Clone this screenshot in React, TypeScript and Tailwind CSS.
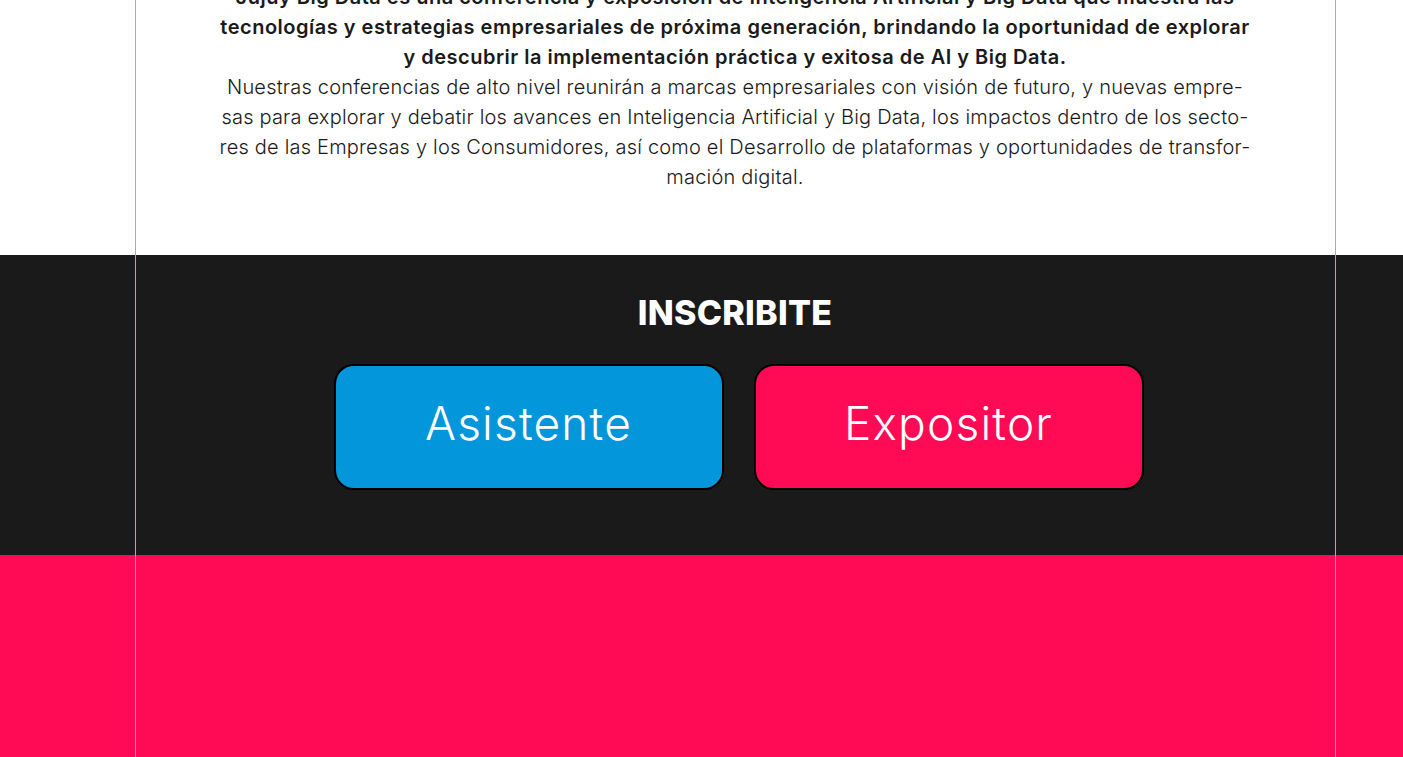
import React from 'react'

const boldLines = [
  'Jujuy Big Data es una conferencia y exposición de Inteligencia Artificial y Big Data que muestra las',
  'tecnologías y estrategias empresariales de próxima generación, brindando la oportunidad de explorar',
  'y descubrir la implementación práctica y exitosa de AI y Big Data.',
]

const lightLines = [
  'Nuestras conferencias de alto nivel reunirán a marcas empresariales con visión de futuro, y nuevas empre-',
  'sas para explorar y debatir los avances en Inteligencia Artificial y Big Data, los impactos dentro de los secto-',
  'res de las Empresas y los Consumidores, así como el Desarrollo de plataformas y oportunidades de transfor-',
  'mación digital.',
]

export default function App() {
  return (
    <div
      className="relative h-[757px] overflow-hidden bg-white"
      style={{ fontFamily: 'Inter, "Open Sans", sans-serif' }}
    >
      {/* intro */}
      <section className="bg-white">
        <div className="ml-[135px] w-[1200px] -mt-[18px] pb-[63px] flex flex-col items-center text-[20px] leading-[30px] text-[#1a1a1a]">
          {boldLines.map((l) => (
            <div key={l} className="whitespace-nowrap font-semibold tracking-[0.5px]">
              {l}
            </div>
          ))}
          {lightLines.map((l) => (
            <div key={l} className="whitespace-nowrap font-light tracking-[0.2px]">
              {l}
            </div>
          ))}
        </div>
      </section>

      {/* inscripcion */}
      <section className="bg-[#1a1a1a] h-[300px]">
        <div className="ml-[135px] w-[1200px] flex flex-col items-center pt-[36px]">
          <h2 className="text-white text-[34px] leading-[44px] font-extrabold tracking-[0.3px]">INSCRIBITE</h2>
          <div className="flex gap-[30px] mt-[29px] ml-[7px]">
            <button className="w-[390px] h-[126px] pb-[8px] rounded-[20px] border-2 border-black bg-[#0496db] text-white text-[46px] font-light tracking-[1.2px]">
              Asistente
            </button>
            <button className="w-[390px] h-[126px] pb-[8px] rounded-[20px] border-2 border-black bg-[#ff0a55] text-white text-[46px] font-light tracking-[1.2px]">
              Expositor
            </button>
          </div>
        </div>
      </section>

      <section className="bg-[#ff0a55] h-[300px]" />

      {/* guias */}
      <div className="pointer-events-none absolute inset-y-0 left-[135px] w-[1201px] border-x border-[#00f0ff]" />
    </div>
  )
}
